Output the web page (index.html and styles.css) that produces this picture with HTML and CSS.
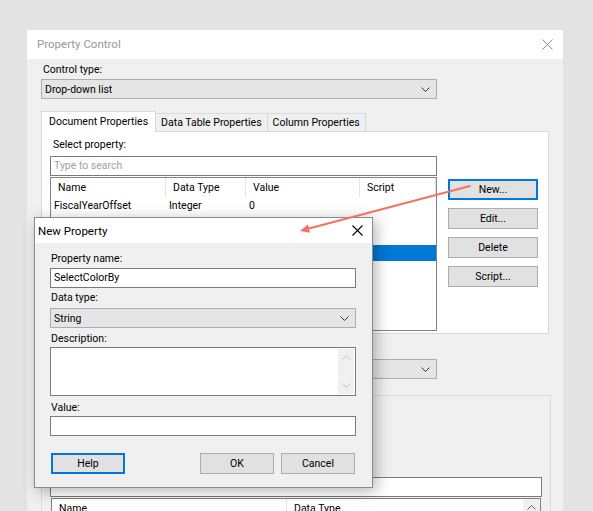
FILE: index.html
```html
<!DOCTYPE html>
<html lang="en">
<head>
  <meta charset="UTF-8">
  <title>Property Control</title>
  <link rel="stylesheet" href="styles.css">
</head>
<body>

  <div class="screen">
    <div class="window">
      <div class="titlebar">
        <span class="title">Property Control</span>
        <svg class="close" width="11" height="11" viewBox="0 0 11 11"><path d="M0.5 0.5L10.5 10.5M10.5 0.5L0.5 10.5" stroke="#8a8a8a" stroke-width="1"/></svg>
      </div>

      <div class="win-body">
        <div class="lbl">Control type:</div>
        <div class="combo combo-main">
          <span>Drop-down list</span>
          <svg width="9" height="5" viewBox="0 0 9 5"><polyline points="0.5,0.5 4.5,4.5 8.5,0.5" fill="none" stroke="#333" stroke-width="1"/></svg>
        </div>

        <div class="tabs">
          <div class="tab active">Document Properties</div>
          <div class="tab">Data Table Properties</div>
          <div class="tab">Column Properties</div>
        </div>

        <div class="panel">
          <div class="prop-col">
            <div class="lbl">Select property:</div>
            <div class="search">Type to search</div>
            <div class="listview">
              <div class="lv-head">
                <div>Name</div>
                <div>Data Type</div>
                <div>Value</div>
                <div>Script</div>
              </div>
              <div class="lv-row">
                <div>FiscalYearOffset</div>
                <div>Integer</div>
                <div>0</div>
                <div></div>
              </div>
              <div class="lv-row"></div>
              <div class="lv-row"></div>
              <div class="lv-row selected"></div>
            </div>
          </div>
          <div class="btn-col">
            <div class="btn focus">New...</div>
            <div class="btn">Edit...</div>
            <div class="btn">Delete</div>
            <div class="btn">Script...</div>
          </div>
        </div>

        <div class="combo combo-second">
          <span></span>
          <svg width="9" height="5" viewBox="0 0 9 5"><polyline points="0.5,0.5 4.5,4.5 8.5,0.5" fill="none" stroke="#333" stroke-width="1"/></svg>
        </div>

        <div class="group">
          <div class="textbox"></div>
          <div class="listview lower">
            <div class="lv-head two">
              <div>Name</div>
              <div>Data Type</div>
            </div>
            <div class="vscroll dark">
              <svg width="9" height="5" viewBox="0 0 9 5"><polyline points="0.5,4.5 4.5,0.5 8.5,4.5" fill="none" stroke="#606060" stroke-width="1"/></svg>
            </div>
          </div>
        </div>
      </div>
    </div>

    <div class="dialog">
      <div class="dlg-title">
        <span>New Property</span>
        <svg width="11" height="11" viewBox="0 0 11 11"><path d="M0.5 0.5L10.5 10.5M10.5 0.5L0.5 10.5" stroke="#000" stroke-width="1.1"/></svg>
      </div>
      <div class="dlg-body">
        <div class="lbl">Property name:</div>
        <div class="textbox field">SelectColorBy</div>

        <div class="lbl gap2">Data type:</div>
        <div class="combo field gap3">
          <span>String</span>
          <svg width="9" height="5" viewBox="0 0 9 5"><polyline points="0.5,0.5 4.5,4.5 8.5,0.5" fill="none" stroke="#333" stroke-width="1"/></svg>
        </div>

        <div class="lbl gap3">Description:</div>
        <div class="textarea">
          <div class="vscroll">
            <svg width="9" height="5" viewBox="0 0 9 5"><polyline points="0.5,4.5 4.5,0.5 8.5,4.5" fill="none" stroke="#c2c2c2" stroke-width="1"/></svg>
            <svg width="9" height="5" viewBox="0 0 9 5"><polyline points="0.5,0.5 4.5,4.5 8.5,0.5" fill="none" stroke="#c2c2c2" stroke-width="1"/></svg>
          </div>
        </div>

        <div class="lbl gap4">Value:</div>
        <div class="textbox field"></div>

        <div class="dlg-buttons">
          <div class="btn focus">Help</div>
          <div class="btn-pair">
            <div class="btn">OK</div>
            <div class="btn">Cancel</div>
          </div>
        </div>
      </div>
    </div>

    <!-- callout arrow from New... to the dialog -->
    <svg class="arrow" width="593" height="511" viewBox="0 0 593 511">
      <line x1="470" y1="186" x2="307" y2="229" stroke="#f07461" stroke-width="2" stroke-linecap="round"/>
      <polygon points="300,231 310,232.8 308,224.6" fill="#f07461"/>
    </svg>
  </div>

</body>
</html>
```

FILE: styles.css
```css
body {
  margin: 0;
  background-color: #e3e3e3;
  font-family: Roboto, "Liberation Sans", sans-serif;
  font-size: 10.5px;
  color: #000;
  overflow: hidden;
}
.screen {
  position: relative;
  width: 593px;
  height: 511px;
  padding: 30px 30px 0 27px;
  box-sizing: border-box;
  overflow: hidden;
}
.window {
  background-color: #f0f0f0;
  height: 520px;
}
.titlebar {
  height: 29px;
  background-color: #fff;
  display: flex;
  align-items: center;
  justify-content: space-between;
  padding: 0 10px 0 10px;
}
.title {
  color: #999;
  font-size: 11.5px;
  margin-top: -1px;
}
.win-body {
  padding: 3px 14px 0 14px;
}
.lbl {
  line-height: 15px;
  padding-left: 2px;
}
.combo {
  height: 20px;
  box-sizing: border-box;
  border: 1px solid #adadad;
  background-color: #e5e5e5;
  display: flex;
  align-items: center;
  justify-content: space-between;
  padding: 0 6px 0 3px;
}
.combo-main {
  width: 396px;
  margin-top: 2px;
}
.combo-second {
  width: 396px;
  margin-top: 25px;
}
.tabs {
  display: flex;
  align-items: flex-end;
  height: 20px;
  margin-top: 12px;
  position: relative;
  z-index: 1;
}
.tab {
  height: 18px;
  box-sizing: border-box;
  border: 1px solid #d9d9d9;
  border-bottom: none;
  border-left: none;
  background-color: #f0f0f0;
  padding: 0 5px;
  line-height: 18px;
}
.tab.active {
  height: 21px;
  margin-bottom: -1px;
  background-color: #fff;
  border-left: 1px solid #d9d9d9;
  line-height: 19px;
  padding: 0 7px;
}
.panel {
  height: 203px;
  box-sizing: border-box;
  background-color: #fff;
  border: 1px solid #d9d9d9;
  display: flex;
  padding: 5px 10px 0 8px;
}
.prop-col {
  width: 388px;
}
.prop-col .lbl {
  padding-left: 3px;
}
.search {
  height: 20px;
  box-sizing: border-box;
  margin-top: 4px;
  border: 1px solid #7a7a7a;
  color: #a0a0a0;
  padding-left: 3px;
  line-height: 18px;
}
.listview {
  margin-top: 1px;
  height: 154px;
  box-sizing: border-box;
  border: 1px solid #828282;
  background-color: #fff;
}
.lv-head, .lv-row {
  display: grid;
  grid-template-columns: 115px 80px 114px 1fr;
}
.lv-head {
  height: 19px;
  line-height: 19px;
}
.lv-head div {
  border-right: 1px solid #e5e5e5;
  padding-left: 7px;
}
.lv-row {
  height: 16px;
  line-height: 18px;
}
.lv-row div {
  padding-left: 3px;
}
.lv-row.selected {
  background-color: #0078d7;
}
.btn-col {
  margin-left: 11px;
  padding-top: 42px;
  display: flex;
  flex-direction: column;
  gap: 8px;
}
.btn {
  width: 90px;
  height: 21px;
  box-sizing: border-box;
  border: 1px solid #adadad;
  background-color: #e1e1e1;
  text-align: center;
  line-height: 19px;
}
.btn.focus {
  border: 2px solid #0078d7;
  line-height: 17px;
}
.group {
  width: 510px;
  margin-top: 16px;
  height: 140px;
  box-sizing: border-box;
  border: 1px solid #dcdcdc;
  padding: 81px 8px 0 8px;
}
.textbox {
  height: 20px;
  box-sizing: border-box;
  border: 1px solid #7a7a7a;
  background-color: #fff;
  padding-left: 3px;
  line-height: 18px;
}
.listview.lower {
  position: relative;
  margin: 1px 1px 0 1px;
  height: 60px;
}
.lv-head.two {
  grid-template-columns: 235px 1fr;
}
.vscroll {
  position: absolute;
  top: 1px;
  right: 1px;
  bottom: 1px;
  width: 16px;
  background-color: #f0f0f0;
  display: flex;
  flex-direction: column;
  align-items: center;
  justify-content: space-between;
  padding: 6px 0;
  box-sizing: border-box;
}
.vscroll.dark {
  top: 0;
  right: 0;
  width: 17px;
  justify-content: flex-start;
}

/* New Property dialog */
.dialog {
  position: absolute;
  left: 34px;
  top: 217px;
  width: 339px;
  height: 271px;
  box-sizing: border-box;
  border: 1px solid #8a8a8a;
  background-color: #f0f0f0;
  box-shadow: 3px 3px 14px rgba(0,0,0,0.3);
  z-index: 2;
}
.dlg-title {
  height: 25px;
  background-color: #fff;
  display: flex;
  align-items: center;
  justify-content: space-between;
  padding: 0 9px 0 3px;
  font-size: 11.5px;
}
.dlg-body {
  padding: 8px 16px 0 15px;
}
.dlg-body .lbl {
  padding-left: 1px;
}
.field {
  margin-top: 2px;
}
.gap2 {
  margin-top: 2px;
}
.gap3 {
  margin-top: 3px;
}
.gap4 {
  margin-top: 4px;
}
.textarea {
  position: relative;
  margin-top: 1px;
  height: 49px;
  box-sizing: border-box;
  border: 1px solid #7a7a7a;
  background-color: #fff;
}
.dlg-body .gap4 + .field {
  margin-top: 1px;
}
.dlg-buttons {
  display: flex;
  justify-content: space-between;
  margin-top: 17px;
  padding: 0 1px;
}
.dlg-buttons .btn {
  width: 74px;
}
.btn-pair {
  display: flex;
  gap: 7px;
}
.arrow {
  position: absolute;
  left: 0;
  top: 0;
  z-index: 3;
  pointer-events: none;
}
```
